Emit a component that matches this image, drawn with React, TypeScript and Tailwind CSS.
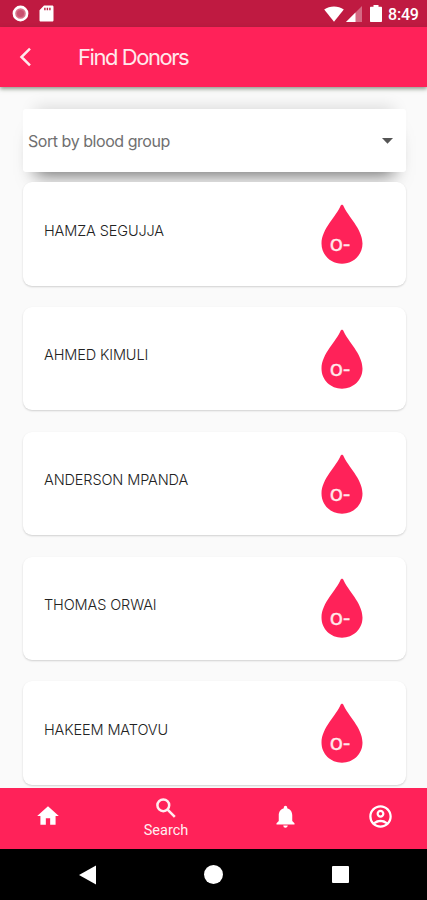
import { MdHome, MdNotifications, MdOutlineAccountCircle } from 'react-icons/md'

interface Donor {
  name: string
  bloodGroup: string
}

const donors: Donor[] = [
  { name: 'HAMZA SEGUJJA', bloodGroup: 'O-' },
  { name: 'AHMED KIMULI', bloodGroup: 'O-' },
  { name: 'ANDERSON MPANDA', bloodGroup: 'O-' },
  { name: 'THOMAS ORWAI', bloodGroup: 'O-' },
  { name: 'HAKEEM MATOVU', bloodGroup: 'O-' },
]

function StatusBar() {
  return (
    <div className="flex h-[27px] shrink-0 items-center bg-[#bf1a41] pr-[8px] pl-[12px] text-white">
      <svg width="17" height="17" viewBox="0 0 17 17">
        <circle cx="8.5" cy="8.5" r="6.6" fill="#d9728a" stroke="#fff" strokeWidth="2.6" />
        <circle cx="8.5" cy="8.5" r="3.6" fill="#c9506f" />
      </svg>
      <svg className="ml-[10px]" width="15" height="17" viewBox="0 0 15 17">
        <path
          fill="#fff"
          fillRule="evenodd"
          d="M5 .5h8.2c.8 0 1.3.6 1.3 1.3v13.4c0 .8-.5 1.3-1.3 1.3H1.8c-.8 0-1.3-.5-1.3-1.3V5.2zM5.2 2.7v2.6h1.4V2.7zm2.5 0v2.6h1.4V2.7zm2.5 0v2.6h1.4V2.7z"
        />
      </svg>
      <svg className="ml-auto" width="20" height="16" viewBox="0 0 20 16">
        <path fill="#fff" d="M10 15.7.2 3.5C5.7-.6 14.3-.6 19.8 3.5z" />
      </svg>
      <svg className="ml-[2px]" width="16" height="16" viewBox="0 0 16 16">
        <path fill="#fff" fillOpacity=".35" d="M16 0v16H0z" />
        <path fill="#fff" d="M9.5 6.5V16H0z" />
      </svg>
      <svg className="ml-[8px]" width="12" height="17" viewBox="0 0 12 17">
        <path fill="#fff" d="M3.5 0h5v1.7H11c.6 0 1 .4 1 1v13.3c0 .6-.4 1-1 1H1c-.6 0-1-.4-1-1V2.7c0-.6.4-1 1-1h2.5z" />
      </svg>
      <span className="ml-[6px] w-[31px] pt-[2px] font-[Roboto] text-[16px] leading-none font-medium tracking-[-0.2px]">
        8:49
      </span>
    </div>
  )
}

function AppBar() {
  return (
    <header className="z-10 flex h-[60px] shrink-0 items-center bg-[#ff2259] pl-[19px] shadow-[0_2px_4px_rgba(40,60,30,0.5)]">
      <svg width="13" height="20" viewBox="0 0 13 20" fill="none" stroke="#ffe9ec" strokeWidth="2.5">
        <path d="M11 1.7 2.5 10 11 18.3" />
      </svg>
      <h1 className="ml-[46px] text-[22px] leading-none tracking-[-1.45px] whitespace-nowrap text-[#ffe9ec]">
        Find Donors
      </h1>
    </header>
  )
}

function SortSelect() {
  return (
    <div className="flex h-[63px] shrink-0 items-center rounded-[3px] bg-white pr-[13px] pl-[5px] shadow-[0_15px_18px_-12px_rgba(0,0,0,0.58),0_-14px_16px_-12px_rgba(0,0,0,0.13)]">
      <span className="text-[16px] tracking-[-0.45px] text-[#707070]">Sort by blood group</span>
      <svg className="ml-auto" width="11" height="6" viewBox="0 0 11 6">
        <path fill="#555" d="M0 0h11L5.5 5.7z" />
      </svg>
    </div>
  )
}

function BloodDrop({ group }: { group: string }) {
  return (
    <svg width="42" height="60" viewBox="0 0 42 60">
      <path
        fill="#ff2259"
        d="M21 .8c.7 0 1.2.5 1.6 1.5C26.5 12 41.5 25 41.5 39.5 41.5 51 32.3 59.7 21 59.7S.5 51 .5 39.5C.5 25 15.5 12 19.4 2.3 19.8 1.3 20.3.8 21 .8z"
      />
      <text
        x="9"
        y="46.5"
        fill="#ffe9ec"
        stroke="#ffe9ec"
        strokeWidth=".4"
        fontSize="15.5"
        fontWeight="500"
        textLength="20.5"
        lengthAdjust="spacingAndGlyphs"
      >
        {group}
      </text>
    </svg>
  )
}

function DonorCard({ donor }: { donor: Donor }) {
  return (
    <li className="flex h-[103.5px] shrink-0 items-center justify-between rounded-[9px] bg-white pr-[43px] pl-[21px] shadow-[0_1px_2px_rgba(0,0,0,0.17)]">
      <span className="pb-[7px] text-[14.5px] font-light tracking-[-0.12px] text-[#222]">{donor.name}</span>
      <BloodDrop group={donor.bloodGroup} />
    </li>
  )
}

function BottomNav() {
  return (
    <nav className="z-10 grid h-[61px] shrink-0 grid-cols-[96px_140px_99px_91px] items-center justify-items-center bg-[#ff2259] pb-[5px] text-white">
      <MdHome size={26} />
      <div className="flex flex-col items-center pt-[2px] text-[#ffeef0]">
        <svg width="26" height="26" viewBox="0 0 26 26" fill="none" stroke="currentColor" strokeWidth="2.5">
          <circle cx="10.3" cy="10.3" r="5.9" />
          <path d="m14.6 14.6 7.2 7.2" />
        </svg>
        <span className="mt-[1px] font-[Roboto] text-[14.5px] leading-[18px]">Search</span>
      </div>
      <MdNotifications size={27} />
      <MdOutlineAccountCircle size={27} />
    </nav>
  )
}

function SystemNav() {
  return (
    <div className="flex h-[51px] shrink-0 items-center bg-black pl-[79px]">
      <svg width="17" height="20" viewBox="0 0 17 20">
        <path fill="#fff" d="M17 .5v19L0 10z" />
      </svg>
      <div className="ml-[108px] size-[19px] rounded-full bg-white" />
      <div className="ml-[109px] size-[17px] rounded-[1px] bg-white" />
    </div>
  )
}

export default function App() {
  return (
    <div className="flex h-[900px] w-[427px] flex-col overflow-hidden bg-[#fafafa] font-[Inter,sans-serif]">
      <StatusBar />
      <AppBar />
      <main className="flex min-h-0 flex-1 flex-col overflow-hidden pt-[22px] pr-[21px] pl-[23px]">
        <SortSelect />
        <ul className="mt-[10.2px] flex flex-col gap-[21.3px]">
          {donors.map((donor) => (
            <DonorCard key={donor.name} donor={donor} />
          ))}
        </ul>
      </main>
      <BottomNav />
      <SystemNav />
    </div>
  )
}
